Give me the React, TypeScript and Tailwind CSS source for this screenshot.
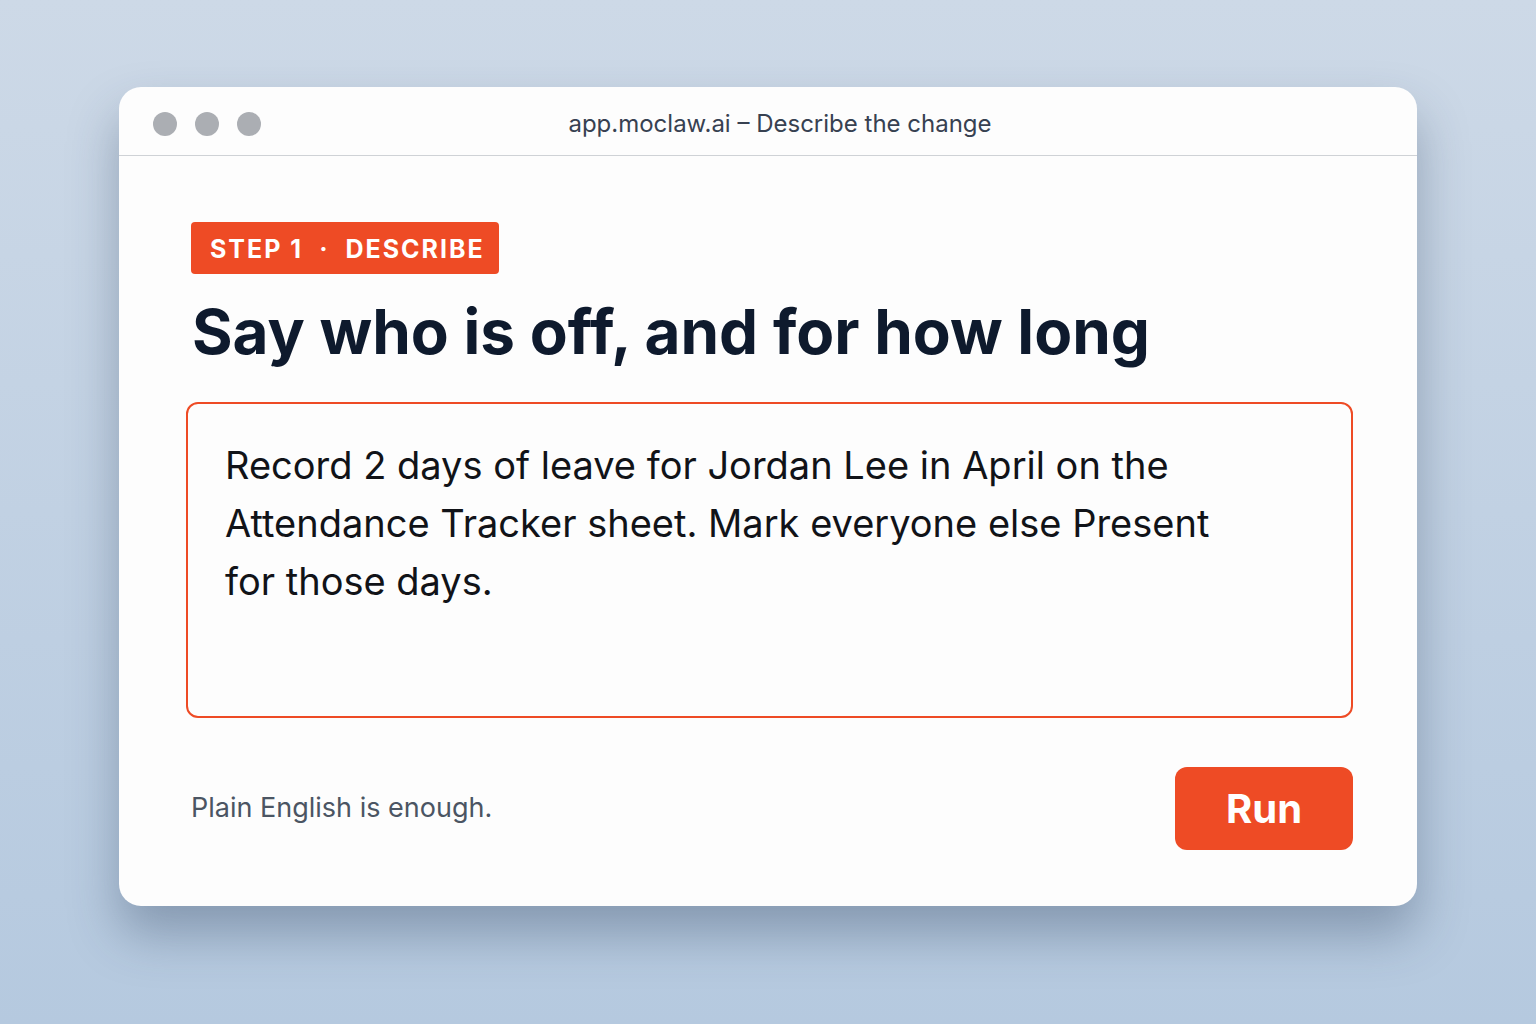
export default function App() {
  return (
    <div
      className="min-h-[1024px] w-full bg-gradient-to-b from-[#cdd9e7] to-[#b5c9df] pt-[87px]"
      style={{ fontFamily: 'Inter, "Noto Sans", sans-serif' }}
    >
      <div className="mx-auto w-[1298px] h-[819px] rounded-[22px] bg-[#fdfdfd] shadow-[0_28px_50px_rgba(40,60,90,0.35)] overflow-hidden">
        {/* title bar */}
        <div className="h-[69px] flex items-center pl-[34px] pt-[6px] border-b border-[#cfd2d6]">
          <div className="flex gap-[18px]">
            <span className="w-6 h-6 rounded-full bg-[#abaeb3]" />
            <span className="w-6 h-6 rounded-full bg-[#abaeb3]" />
            <span className="w-6 h-6 rounded-full bg-[#abaeb3]" />
          </div>
          <div className="flex-1 text-center pr-[118px] text-[24px] text-[#374151]">
            app.moclaw.ai – Describe the change
          </div>
        </div>

        <div className="pl-[67px] pr-[64px] pt-[66px]">
          <div className="ml-[5px] inline-flex items-center h-[52px] pl-[19px] pr-[14px] pt-[4px] rounded-[4px] bg-[#ee4b25] text-white text-[25px] font-bold tracking-[0.08em]">
            STEP 1 <span className="mx-[16px]">·</span> DESCRIBE
          </div>

          <h1 className="ml-[6px] mt-[22px] text-[62px] leading-[72px] font-bold text-[#0e1a2d]">
            Say who is off, and for how long
          </h1>

          <div className="mt-[34px] h-[316px] rounded-[12px] border-2 border-[#ee4b25] pl-[37px] pr-[60px] pt-[32px]">
            <p className="text-[38px] leading-[58px] text-[#111318]">
              Record 2 days of leave for Jordan Lee in April on the
              <br />
              Attendance Tracker sheet. Mark everyone else Present
              <br />
              for those days.
            </p>
          </div>

          <div className="mt-[49px] flex items-center justify-between">
            <span className="ml-[5px] text-[27px] text-[#4b5563]">Plain English is enough.</span>
            <button className="w-[178px] h-[83px] rounded-[12px] bg-[#ee4b25] text-white text-[40px] font-bold">
              Run
            </button>
          </div>
        </div>
      </div>
    </div>
  );
}
